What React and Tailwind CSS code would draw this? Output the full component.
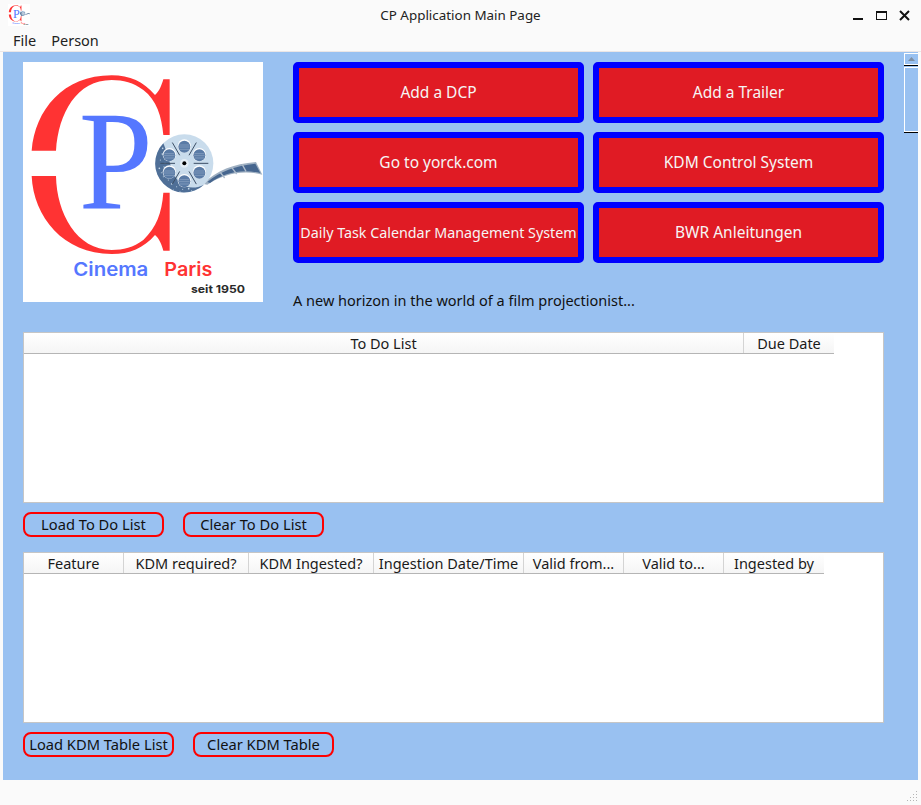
const FONT = { fontFamily: '"Noto Sans", sans-serif' };

const holes = [-90, -30, 30, 90, 150, 210];
const spokes = [0, 60, 120, 180, 240, 300];
const specks = [
  [487, 462], [481, 480], [492, 500], [478, 505], [498, 520], [505, 540], [515, 552], [530, 560], [548, 568], [566, 566],
  [490, 530], [500, 478], [488, 445], [520, 570], [575, 572], [510, 505], [495, 490], [484, 518], [512, 528], [540, 575],
];

function Logo({ size }) {
  return (
    <svg viewBox="69 186 720 720" width={size} height={size} className="block bg-white shrink-0">
      <path fill="#ff3333" d="M95,452 C105,330 190,226 335,226 C390,226 430,245 465,285 C478,275 485,255 490,238 L509,238 L509,405 L490,405 C485,350 470,300 430,270 C400,248 370,240 335,240 C230,240 175,340 168,452 Z" />
      <path fill="#ff3333" d="M95,528 C100,650 190,762 335,762 C390,762 430,745 465,705 C478,715 485,735 490,752 L509,752 L509,578 L490,578 C485,640 470,680 430,720 C400,742 370,750 335,750 C230,750 170,640 168,528 Z" />
      <text x="236" y="628" fontSize="424" fontFamily='"Liberation Serif", serif' fill="#5577ff" textLength="222" lengthAdjust="spacingAndGlyphs">P</text>
      <path fill="#9fb0c2" d="M610,552 C650,510 700,492 768,486 L787,524 C730,508 670,522 622,554 Z" />
      <path fill="#46668f" d="M622,546 C660,514 705,498 766,491 L781,519 C725,506 672,518 630,549 Z" />
      <path stroke="#aebccb" strokeWidth="4" fill="none" d="M660,516 L674,534 M695,502 L710,522 M727,494 L738,514" />
      <circle cx="553" cy="490" r="87" fill="#c9dcec" />
      <path fill="#4f6f97" d="M490,430 A87,87 0 0,0 612,554 C565,578 528,550 514,505 C506,472 498,450 490,430 Z" />
      {specks.map(([x, y], i) => (
        <circle key={i} cx={x} cy={y} r={i % 3 === 0 ? 2.5 : 1.6} fill="#c9dcec" />
      ))}
      {holes.map((a) => {
        const r = (a * Math.PI) / 180;
        const x = 553 + 52 * Math.cos(r);
        const y = 490 + 52 * Math.sin(r);
        return (
          <g key={a}>
            <circle cx={x} cy={y} r="20" fill="#ffffff" />
            <circle cx={x} cy={y + 2} r="18" fill="#5a7ba6" />
            <path stroke="#8fa8c6" strokeWidth="2" d={`M${x - 15},${y - 3} H${x + 15} M${x - 16},${y + 3} H${x + 16} M${x - 14},${y + 10} H${x + 14}`} />
          </g>
        );
      })}
      {spokes.map((a) => {
        const r = (a * Math.PI) / 180;
        return (
          <line key={a} x1={553 + 28 * Math.cos(r)} y1={490 + 28 * Math.sin(r)} x2={553 + 72 * Math.cos(r)} y2={490 + 72 * Math.sin(r)} stroke="#3d4f66" strokeWidth="3" />
        );
      })}
      <circle cx="553" cy="490" r="13" fill="#e4eef6" />
      <circle cx="553" cy="490" r="6" fill="#000000" />
      <text x="220" y="828" fontSize="56" fontWeight="600" fontFamily='Inter, sans-serif' fill="#5577ff" textLength="225" lengthAdjust="spacingAndGlyphs">Cinema</text>
      <text x="493" y="828" fontSize="56" fontWeight="600" fontFamily='Inter, sans-serif' fill="#ff3333" textLength="144" lengthAdjust="spacingAndGlyphs">Paris</text>
      <text x="573" y="880" fontSize="33" fontWeight="700" fontFamily='Inter, sans-serif' fill="#2a2a2a" textLength="162" lengthAdjust="spacingAndGlyphs">seit 1950</text>
    </svg>
  );
}

function BigButton({ children, small }) {
  return (
    <button className={`h-[61px] w-[291px] rounded-[5px] border-[6px] border-[#0000ff] bg-[#e01b24] text-[#f6f5f4] flex items-center justify-center whitespace-nowrap ${small ? "text-[14.3px]" : "text-[15.5px]"}`}>
      {children}
    </button>
  );
}

function SmallButton({ children, width }) {
  return (
    <button style={{ width }} className="h-[25px] rounded-[8px] border-2 border-[#ff0000] bg-[#99c1f1] text-[#111] text-[14.7px] flex items-center justify-center whitespace-nowrap">
      {children}
    </button>
  );
}

function HeaderCell({ children, width, last }) {
  return (
    <div style={{ width }} className={`h-full pt-[1px] flex items-center justify-center text-[14.5px] text-[#1a1a1a] whitespace-nowrap ${last ? "" : "border-r border-[#d4d4d4]"}`}>
      {children}
    </div>
  );
}

function DataTable({ columns }) {
  return (
    <div className="w-[861px] h-[171px] bg-white border border-[#c6c6c6]">
      <div className="flex w-fit h-[20px] bg-gradient-to-b from-white to-[#f5f5f5] border-b border-[#b5b5b5] box-content">
        {columns.map(([label, w], i) => (
          <HeaderCell key={label} width={w} last={i === columns.length - 1}>{label}</HeaderCell>
        ))}
      </div>
    </div>
  );
}

export default function App() {
  return (
    <div style={FONT} className="relative w-[921px] h-[805px] bg-[#fafafa] overflow-hidden flex flex-col">
      <div className="relative h-[30px] flex items-center justify-center text-[13.4px] text-[#222]">
        <div className="absolute left-[8px] top-[4px]"><Logo size={22} /></div>
        CP Application Main Page
        <div className="absolute right-[11px] top-[10px] flex items-center gap-[12px]">
          <svg width="11" height="11" viewBox="0 0 11 11"><rect x="0" y="8" width="10" height="2" fill="#111" /></svg>
          <svg width="11" height="11" viewBox="0 0 11 11"><rect x="0.5" y="1.5" width="10" height="8" fill="none" stroke="#111" /><rect x="0" y="1" width="11" height="2" fill="#111" /></svg>
          <svg width="11" height="11" viewBox="0 0 11 11"><path d="M1 1 L10 10 M10 1 L1 10" stroke="#111" strokeWidth="2" fill="none" /></svg>
        </div>
      </div>
      <div className="h-[22px] flex items-center gap-[15px] pl-[13px] text-[14.5px] text-[#222] border-b border-[#ebe6e6]">
        <span>File</span>
        <span>Person</span>
      </div>

      <main className="relative ml-[3px] w-[915px] h-[728px] bg-[#99c1f1] pl-[20px] pt-[10px]">
        <div className="flex">
          <Logo size={240} />
          <div className="ml-[30px]">
            <div className="grid grid-cols-[291px_291px] gap-x-[9px] gap-y-[9px]">
              <BigButton>Add a DCP</BigButton>
              <BigButton>Add a Trailer</BigButton>
              <BigButton>Go to yorck.com</BigButton>
              <BigButton>KDM Control System</BigButton>
              <BigButton small>Daily Task Calendar Management System</BigButton>
              <BigButton>BWR Anleitungen</BigButton>
            </div>
            <p className="mt-[27px] text-[14.5px] leading-[20px] text-[#111] whitespace-nowrap">A new horizon in the world of a film projectionist...</p>
          </div>
        </div>

        <div className="mt-[22px]">
          <DataTable columns={[["To Do List", 720], ["Due Date", 90]]} />
        </div>
        <div className="mt-[9px] flex gap-[19px]">
          <SmallButton width={141}>Load To Do List</SmallButton>
          <SmallButton width={141}>Clear To Do List</SmallButton>
        </div>

        <div className="mt-[15px]">
          <DataTable columns={[["Feature", 100], ["KDM required?", 125], ["KDM Ingested?", 125], ["Ingestion Date/Time", 150], ["Valid from...", 100], ["Valid to...", 100], ["Ingested by", 100]]} />
        </div>
        <div className="mt-[9px] flex gap-[19px]">
          <SmallButton width={151}>Load KDM Table List</SmallButton>
          <SmallButton width={141}>Clear KDM Table</SmallButton>
        </div>

        <div className="absolute right-0 top-[1px] w-[14px] h-[80px] flex flex-col">
          <div className="h-[12px] border border-white border-r-0 flex items-center justify-center">
            <svg width="7" height="4" viewBox="0 0 7 4"><path d="M3.5 0 L7 4 H0 Z" fill="#7f8fa3" /></svg>
          </div>
          <div className="h-[1px] bg-black" />
          <div className="mt-[1px] h-[65px] border border-white border-r-0" />
          <div className="h-[1px] bg-black" />
        </div>
      </main>

      <div className="absolute right-[3px] bottom-[3px]">
        <svg width="12" height="12" viewBox="0 0 12 12" fill="#b5b5b5">
          <rect x="10" y="1" width="1" height="1" /><rect x="10" y="4" width="1" height="1" /><rect x="7" y="4" width="1" height="1" />
          <rect x="10" y="7" width="1" height="1" /><rect x="7" y="7" width="1" height="1" /><rect x="4" y="7" width="1" height="1" />
          <rect x="10" y="10" width="1" height="1" /><rect x="7" y="10" width="1" height="1" /><rect x="4" y="10" width="1" height="1" /><rect x="1" y="10" width="1" height="1" />
        </svg>
      </div>
    </div>
  );
}
